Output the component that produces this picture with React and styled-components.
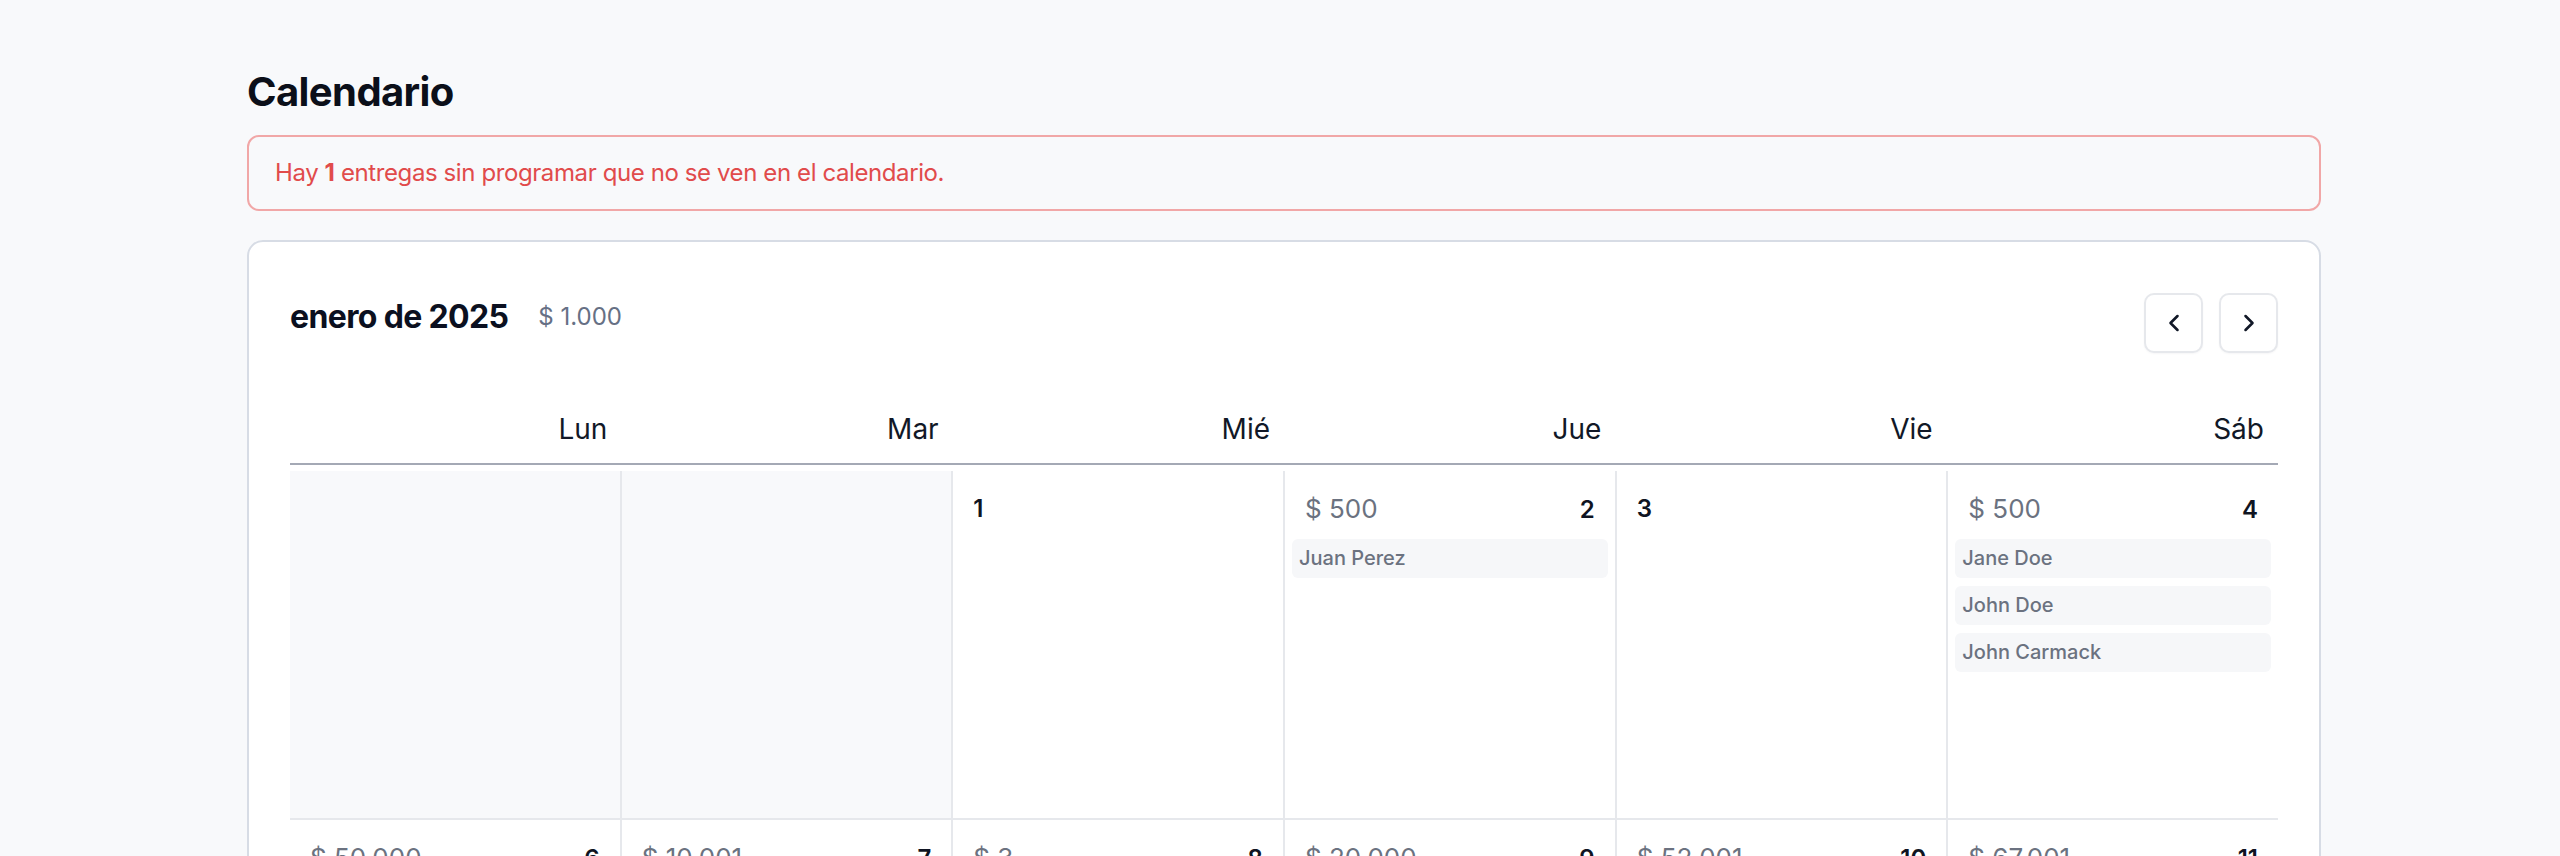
import React from 'react';
import styled, { createGlobalStyle } from 'styled-components';
import { ChevronLeft, ChevronRight } from 'lucide-react';

const GlobalStyle = createGlobalStyle`
  html, body {
    margin: 0;
    padding: 0;
    background: #f8f9fb;
    font-family: Inter, 'Noto Sans', 'Liberation Sans', sans-serif;
    color: #111827;
  }
  * { box-sizing: border-box; }
`;

const Page = styled.main`
  display: flex;
  flex-direction: column;
  padding: 68px 239px 80px 247px;
`;

const Title = styled.h1`
  margin: 0;
  font-size: 40px;
  line-height: 48px;
  font-weight: 700;
  letter-spacing: -0.015em;
  color: #0b0f19;
`;

const Alert = styled.div`
  margin-top: 19px;
  padding: 18px 26px;
  border: 2px solid #f1a7a7;
  border-radius: 12px;
  font-size: 24px;
  line-height: 36px;
  letter-spacing: -0.4px;
  color: #e14b4b;

  b { font-weight: 700; }
`;

const Card = styled.section`
  margin-top: 29px;
  padding: 51px 41px 40px 41px;
  background: #ffffff;
  border: 2px solid #d7dce5;
  border-radius: 16px;
`;

const CardHeader = styled.div`
  display: flex;
  justify-content: space-between;
  align-items: flex-start;
`;

const MonthInfo = styled.div`
  display: flex;
  align-items: center;
  gap: 30px;
  padding-top: 5px;
`;

const MonthTitle = styled.h2`
  margin: 0;
  font-size: 32px;
  line-height: 38px;
  font-weight: 700;
  letter-spacing: -0.02em;
  color: #0b1020;
`;

const MonthTotal = styled.span`
  font-size: 24px;
  line-height: 32px;
  color: #667085;
`;

const NavGroup = styled.div`
  display: flex;
  gap: 16px;
`;

const NavButton = styled.button`
  display: flex;
  align-items: center;
  justify-content: center;
  width: 59px;
  height: 60px;
  padding: 0;
  background: #ffffff;
  border: 2px solid #e6e8ec;
  border-radius: 10px;
  color: #111827;
  cursor: pointer;
  box-shadow: 0 1px 2px rgba(16, 24, 40, 0.04);
`;

const WeekHeader = styled.div`
  display: grid;
  grid-template-columns: repeat(6, 1fr);
  margin-top: 55px;
  padding-bottom: 13px;
  border-bottom: 2px solid #a4a9b5;
`;

const WeekDay = styled.div`
  padding-right: 14px;
  text-align: right;
  font-size: 28px;
  line-height: 42px;
  color: #111827;
`;

const Grid = styled.div`
  display: grid;
  grid-template-columns: repeat(6, 1fr);
  grid-auto-rows: minmax(347px, auto);
  gap: 2px;
  margin-top: 6px;
  background: #e6e8ec;
`;

const Cell = styled.div`
  display: flex;
  flex-direction: column;
  gap: 8px;
  padding: 18px 7px 10px;
  background: ${({ $outside }) => ($outside ? '#f8f9fb' : '#ffffff')};
`;

const CellTop = styled.div`
  display: flex;
  justify-content: space-between;
  align-items: baseline;
  height: 39px;
  margin-bottom: 3px;
  padding: 0 13px;
`;

const Amount = styled.span`
  font-size: 26px;
  line-height: 39px;
  color: #6b7280;
`;

const DayNumber = styled.span`
  font-size: 24px;
  line-height: 39px;
  font-weight: 600;
  color: #0f1422;
`;

const Delivery = styled.div`
  height: 39px;
  padding: 0 7px;
  border-radius: 6px;
  background: #f6f7f9;
  font-size: 20px;
  line-height: 39px;
  font-weight: 500;
  color: #6b7280;
  white-space: nowrap;
  overflow: hidden;
  text-overflow: ellipsis;
`;

const weekDays = ['Lun', 'Mar', 'Mié', 'Jue', 'Vie', 'Sáb'];

const weeks = [
  [
    null,
    null,
    { day: 1 },
    { day: 2, amount: '$ 500', items: ['Juan Perez'] },
    { day: 3 },
    { day: 4, amount: '$ 500', items: ['Jane Doe', 'John Doe', 'John Carmack'] },
  ],
  [
    { day: 6, amount: '$ 50.000', items: ['Ana Gómez'] },
    { day: 7, amount: '$ 10.001', items: ['Juan Perez'] },
    { day: 8, amount: '$ 3', items: ['John Doe'] },
    { day: 9, amount: '$ 20.000', items: ['Jane Doe'] },
    { day: 10, amount: '$ 52.001', items: ['John Carmack'] },
    { day: 11, amount: '$ 67.001', items: ['Juan Perez'] },
  ],
  [{ day: 13 }, { day: 14 }, { day: 15 }, { day: 16 }, { day: 17 }, { day: 18 }],
  [{ day: 20 }, { day: 21 }, { day: 22 }, { day: 23 }, { day: 24 }, { day: 25 }],
  [{ day: 27 }, { day: 28 }, { day: 29 }, { day: 30 }, { day: 31 }, null],
];

const DayCell = ({ data }) => {
  if (!data) return <Cell $outside />;
  return (
    <Cell>
      <CellTop>
        {data.amount && <Amount>{data.amount}</Amount>}
        <DayNumber>{data.day}</DayNumber>
      </CellTop>
      {(data.items || []).map((name) => (
        <Delivery key={name}>{name}</Delivery>
      ))}
    </Cell>
  );
};

const App = () => (
  <>
    <GlobalStyle />
    <Page>
      <Title>Calendario</Title>
      <Alert>
        Hay <b>1</b> entregas sin programar que no se ven en el calendario.
      </Alert>
      <Card>
        <CardHeader>
          <MonthInfo>
            <MonthTitle>enero de 2025</MonthTitle>
            <MonthTotal>$ 1.000</MonthTotal>
          </MonthInfo>
          <NavGroup>
            <NavButton aria-label="Mes anterior">
              <ChevronLeft size={28} strokeWidth={2.2} />
            </NavButton>
            <NavButton aria-label="Mes siguiente">
              <ChevronRight size={28} strokeWidth={2.2} />
            </NavButton>
          </NavGroup>
        </CardHeader>
        <WeekHeader>
          {weekDays.map((d) => (
            <WeekDay key={d}>{d}</WeekDay>
          ))}
        </WeekHeader>
        <Grid>
          {weeks.flat().map((data, i) => (
            <DayCell key={i} data={data} />
          ))}
        </Grid>
      </Card>
    </Page>
  </>
);

export default App;
